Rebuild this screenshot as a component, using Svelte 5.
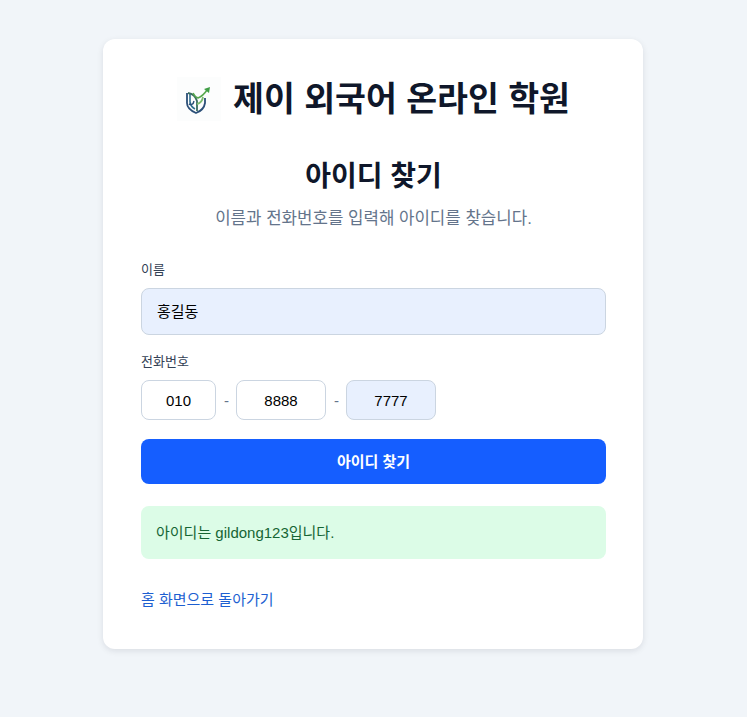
<script>
  let name = '홍길동';
  let phone = ['010', '8888', '7777'];
</script>

<main>
  <div class="card">
    <div class="brand">
      <svg class="logo" viewBox="0 0 44 44" width="44" height="44" aria-hidden="true">
        <rect width="44" height="44" fill="#fcfdfd" />
        <path d="M10 16 L10 26 Q10 32 19 36 Q27 33 28 26 L28 21" fill="none" stroke="#2b4f78" stroke-width="1.8" />
        <path d="M13 17 L13 25 Q14 30 18 32" fill="none" stroke="#2f6f8f" stroke-width="1.6" />
        <path d="M11 16 Q18 17 20 24 L20 34" fill="none" stroke="#3a6d5f" stroke-width="1.8" />
        <path d="M17 24 Q16 29 12 27" fill="none" stroke="#2b4f78" stroke-width="1.4" />
        <path d="M20 27 Q25 26 26 20" fill="none" stroke="#7dbb6e" stroke-width="1.8" />
        <path d="M16 16 Q18 20 21 21 Q26 19 30 13" fill="none" stroke="#58a94f" stroke-width="1.6" />
        <path d="M27 12 L33 10 L32 16 Z" fill="#3f9e45" />
      </svg>
      <h1>제이 외국어 온라인 학원</h1>
    </div>

    <h2>아이디 찾기</h2>
    <p class="sub">이름과 전화번호를 입력해 아이디를 찾습니다.</p>

    <form on:submit|preventDefault>
      <label for="name">이름</label>
      <input id="name" class="full filled" type="text" bind:value={name} />

      <label for="p1">전화번호</label>
      <div class="phone">
        <input id="p1" class="p-a" type="text" bind:value={phone[0]} />
        <span>-</span>
        <input class="p-b" type="text" bind:value={phone[1]} />
        <span>-</span>
        <input class="p-b filled" type="text" bind:value={phone[2]} />
      </div>

      <button type="submit">아이디 찾기</button>
    </form>

    <div class="result">아이디는 gildong123입니다.</div>

    <a href="#/">홈 화면으로 돌아가기</a>
  </div>
</main>

<style>
  :global(body) {
    background: #f1f5f9;
    font-family: "Liberation Sans", "Noto Sans CJK KR", sans-serif;
  }

  main {
    display: flex;
    justify-content: center;
    padding: 39px 1px 68px 0;
  }

  .card {
    width: 465px;
    padding: 38px 37px 38px 38px;
    background: #fff;
    border-radius: 12px;
    box-shadow: 0 2px 6px rgba(15, 23, 42, 0.1);
  }

  .brand {
    display: flex;
    align-items: center;
    justify-content: center;
    gap: 12px;
  }

  .logo {
    flex: none;
  }

  h1 {
    margin: 0;
    padding-top: 2px;
    font-size: 33.6px;
    font-weight: 700;
    line-height: 42px;
    white-space: nowrap;
    color: #0f172a;
  }

  h2 {
    margin: 38px 0 0;
    font-size: 28px;
    line-height: 36px;
    font-weight: 700;
    text-align: center;
    color: #0f172a;
  }

  .sub {
    margin: 12px 0 0;
    font-size: 16.8px;
    line-height: 24px;
    text-align: center;
    color: #64748b;
  }

  form {
    margin-top: 31px;
  }

  label {
    display: block;
    font-size: 13px;
    line-height: 16px;
    margin-bottom: 10px;
    color: #334155;
  }

  input {
    box-sizing: border-box;
    background: #fff;
    border: 1px solid #cbd5e1;
    border-radius: 8px;
    font: inherit;
    font-size: 15px;
    color: #000;
    outline: none;
  }

  .full {
    display: block;
    width: 100%;
    height: 47px;
    padding: 0 15px 2px;
    margin-bottom: 19px;
  }

  .filled {
    background: #e8f0fe;
  }

  .phone {
    display: flex;
    align-items: center;
    gap: 8px;
  }

  .phone input {
    height: 40px;
    text-align: center;
    padding: 0;
  }

  .p-a {
    width: 75px;
  }

  .p-b {
    width: 90px;
  }

  .phone span {
    flex: 0 0 4px;
    min-width: 0;
    font-size: 15px;
    color: #64748b;
  }

  button {
    display: block;
    width: 100%;
    height: 45px;
    margin-top: 19px;
    padding: 0 0 3px;
    background: #155eff;
    color: #fff;
    border: 0;
    border-radius: 8px;
    font: inherit;
    font-size: 15px;
    font-weight: 700;
  }

  .result {
    margin-top: 22px;
    padding: 0 15px 2px;
    height: 53px;
    box-sizing: border-box;
    display: flex;
    align-items: center;
    background: #dcfce7;
    color: #166534;
    border-radius: 8px;
    font-size: 15px;
  }

  a {
    display: block;
    margin-top: 30px;
    margin-bottom: 1px;
    font-size: 15px;
    line-height: 21px;
    color: #1d5fd1;
    text-decoration: none;
  }
</style>
